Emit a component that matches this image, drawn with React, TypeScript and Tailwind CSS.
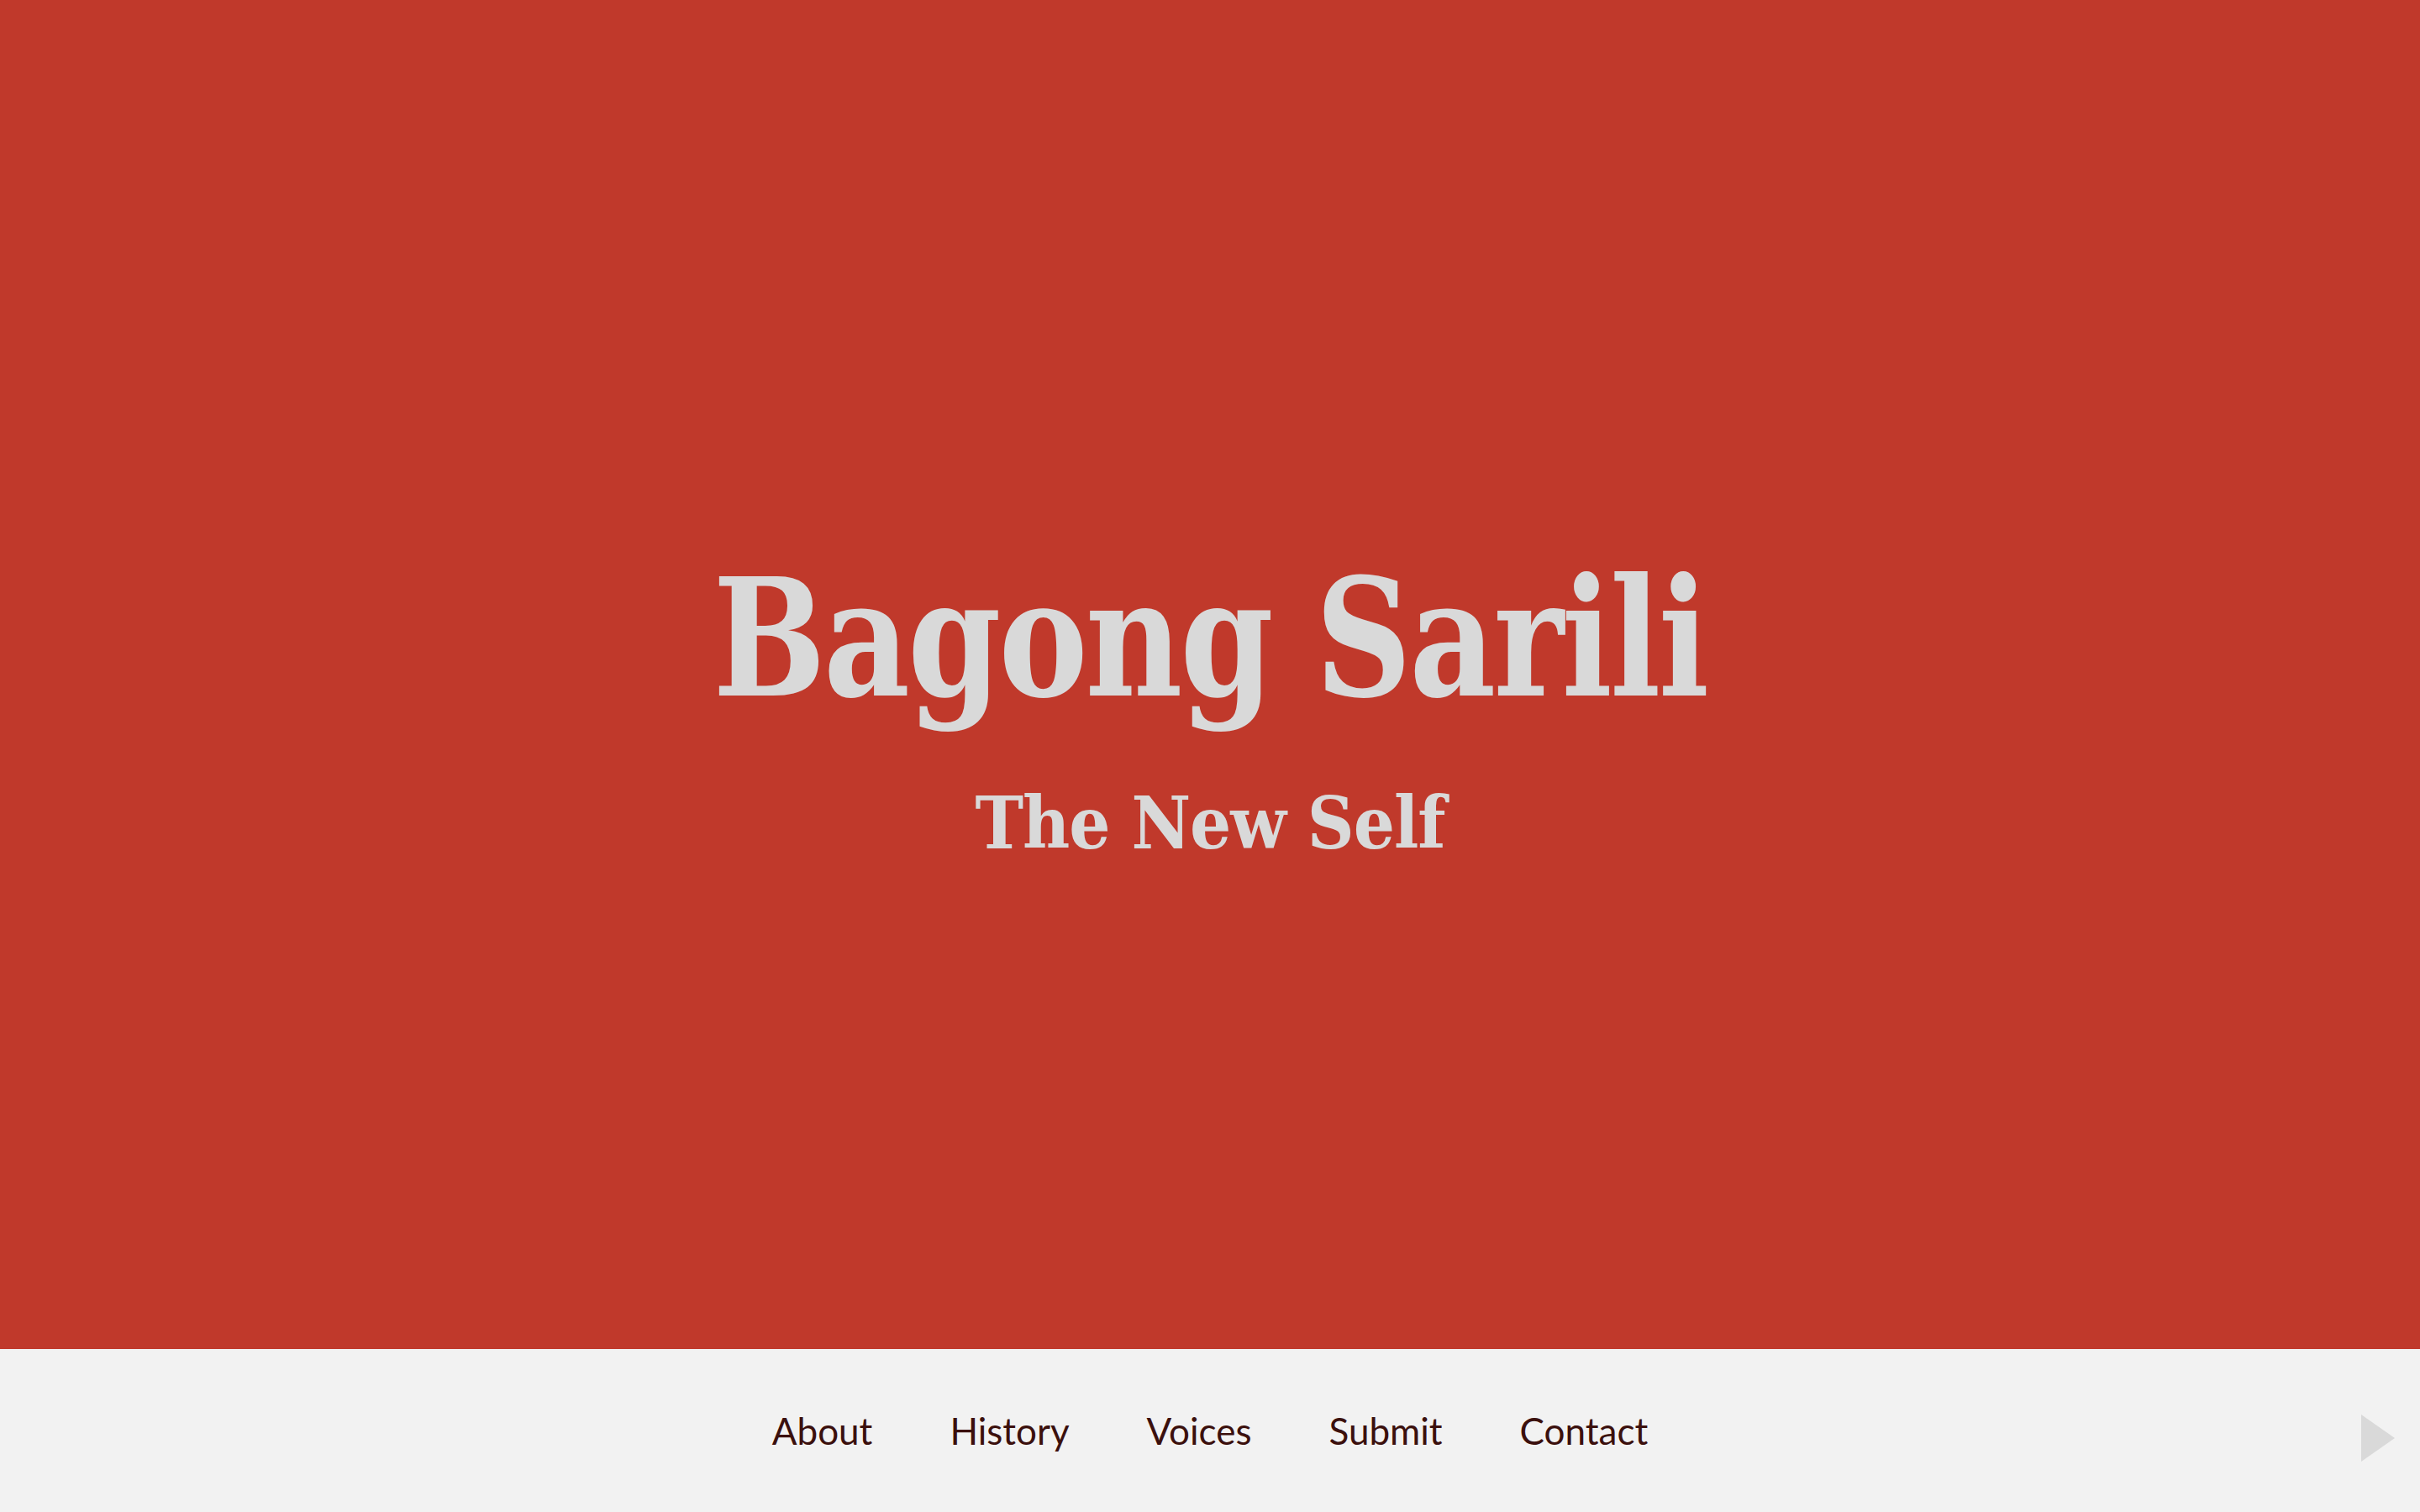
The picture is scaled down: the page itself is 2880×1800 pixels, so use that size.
export default function App() {
  const links = ["About", "History", "Voices", "Submit", "Contact"];

  return (
    <div className="flex h-[1800px] w-full flex-col">
      <header className="flex h-[1606px] flex-col items-center bg-[#c0392b] pt-[640px] text-[#d9d9d9]">
        <h1 className="scale-x-[0.91] font-['DejaVu_Serif_Condensed','DejaVu_Serif',serif] text-[194px] font-bold leading-[240px] tracking-[-3px]">
          Bagong Sarili
        </h1>
        <h2 className="mt-[50px] font-['DejaVu_Serif_Condensed','DejaVu_Serif',serif] text-[86px] font-bold leading-[100px] tracking-[-1px]">
          The New Self
        </h2>
      </header>
      <footer className="relative flex flex-1 items-center justify-center bg-[#f2f2f2]">
        <nav className="flex items-center gap-[92px] font-['Lato',sans-serif] text-[44px] text-[#3b100d]">
          {links.map((link) => (
            <a key={link} href="#" className="leading-none">
              {link}
            </a>
          ))}
        </nav>
        <svg
          className="absolute right-[30px] top-[78px]"
          width="40"
          height="56"
          viewBox="0 0 40 56"
        >
          <path d="M0 0 L40 28 L0 56 Z" fill="#d9d9d9" />
        </svg>
      </footer>
    </div>
  );
}
